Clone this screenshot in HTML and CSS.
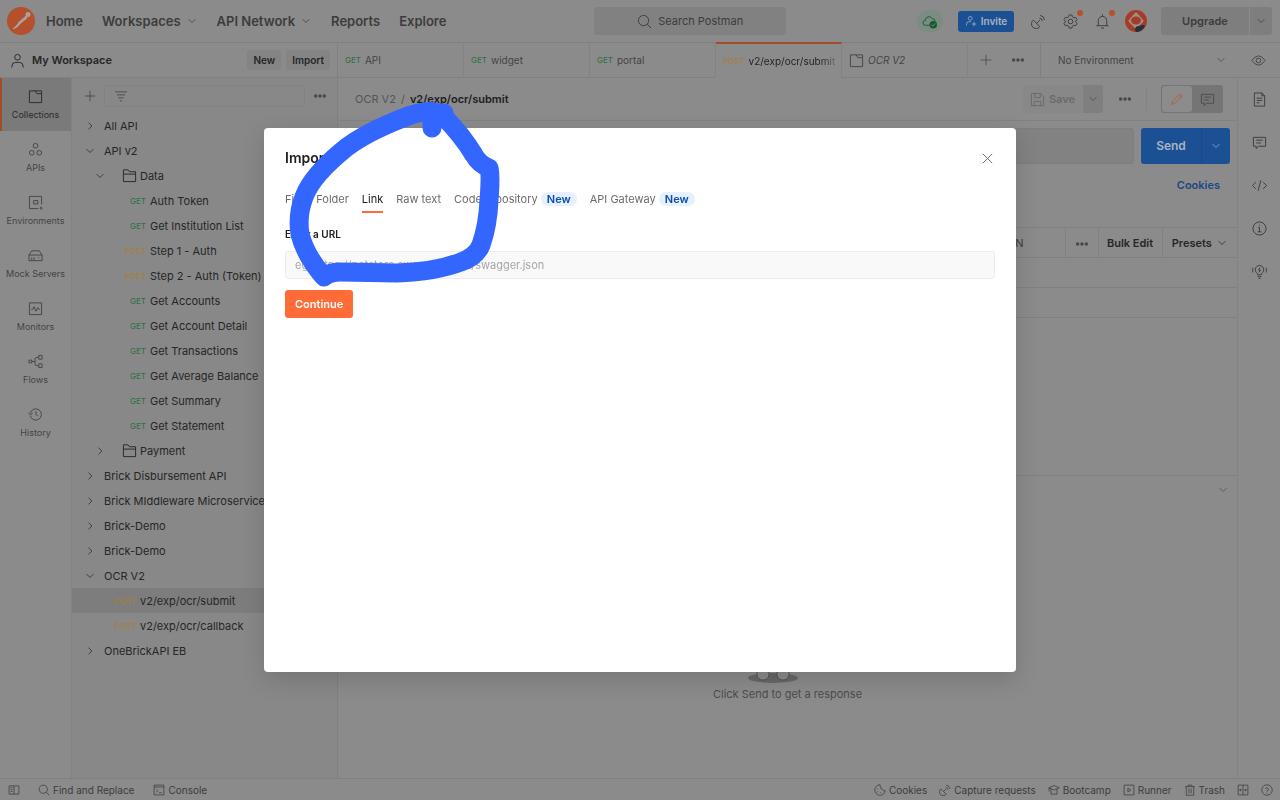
FILE: index.html
```html
<!DOCTYPE html>
<html lang="en">
<head>
    <meta charset="UTF-8">
    <meta name="viewport" content="width=device-width, initial-scale=1.0">
    <title>Postman - My Workspace</title>
    <link rel="stylesheet" href="styles.css">
</head>
<body>
    <!-- Icons -->
    <svg class="sprite" aria-hidden="true">
        <symbol id="i-down" viewBox="0 0 16 16"><path d="M3.500 5.500 8 10l4.500-4.500"/></symbol>
        <symbol id="i-right" viewBox="0 0 16 16"><path d="M6 3.500 10.500 8 6 12.500"/></symbol>
        <symbol id="i-plus" viewBox="0 0 16 16"><path d="M8 1v14M1 8h14"/></symbol>
        <symbol id="i-close" viewBox="0 0 16 16"><path d="m3 3 10 10M13 3 3 13"/></symbol>
        <symbol id="i-dots" viewBox="0 0 16 16"><circle cx="3" cy="8" r="2"/><circle cx="8" cy="8" r="2"/><circle cx="13" cy="8" r="2"/></symbol>
        <symbol id="i-search" viewBox="0 0 16 16"><circle cx="7" cy="7" r="5.500"/><path d="m11 11 4 4"/></symbol>
        <symbol id="i-user" viewBox="0 0 16 16"><circle cx="8" cy="4.500" r="3"/><path d="M2 15.500v-1.500a4 4 0 0 1 4-4h4a4 4 0 0 1 4 4v1.500"/></symbol>
        <symbol id="i-invite" viewBox="0 0 16 16"><circle cx="7" cy="4.500" r="2.500"/><path d="M2 14v-2a3 3 0 0 1 3-3h3M12 9v6M9 12h6"/></symbol>
        <symbol id="i-filter" viewBox="0 0 16 16"><path d="M0 2.500h16M2.500 6.500h11M4.500 10.500h7M6.500 14.500h3"/></symbol>
        <symbol id="i-collection" viewBox="0 0 16 16"><path d="M1.500 2h6l2 3h5v9.500h-13zM7.500 2h7v3"/></symbol>
        <symbol id="i-apis" viewBox="0 0 16 16"><circle cx="8" cy="4" r="2.500"/><circle cx="4" cy="11.500" r="2.500"/><circle cx="12" cy="11.500" r="2.500"/></symbol>
        <symbol id="i-env" viewBox="0 0 16 16"><path d="M14.500 10V1.500h-13v13H11M6 6h4.500v3.500H6z"/><circle cx="14" cy="14" r="1"/></symbol>
        <symbol id="i-mock" viewBox="0 0 16 16"><path d="M1 7.500h14v6H1zM1 7.500 4 3h8l3 4.500M4 10v3M6.500 10v3M11 10.500h1"/></symbol>
        <symbol id="i-monitor" viewBox="0 0 16 16"><path d="M1.500 2h13v12.500h-13zM3.500 9h1.500l1.500-3 2 5 2-4 1 2h1"/></symbol>
        <symbol id="i-flows" viewBox="0 0 16 16"><path d="M1 6.500h3v3H1zM11.500 1.500h3.500v4h-3.500zM11.500 10.500h3.500v4h-3.500zM4 8h3.500M11.500 3.500h-2a2 2 0 0 0-2 2v5a2 2 0 0 0 2 2h2"/></symbol>
        <symbol id="i-history" viewBox="0 0 16 16"><path d="M2.500 9.500a6 6 0 1 0 0-3M.5 6l2 2.500L5 6.500M8.500 4.500V8l2 1.500"/></symbol>
        <symbol id="i-folder" viewBox="0 0 16 16"><path d="M1.500 14.500V2h5l1.500 2h6.500v10.500zM1.500 6.500h13"/></symbol>
        <symbol id="i-eye" viewBox="0 0 16 16"><path d="M1 8q7-10 14 0-7 10-14 0z"/><circle cx="8" cy="8" r="2.500"/></symbol>
        <symbol id="i-save" viewBox="0 0 16 16"><path d="M1.500 1.500h10l3 3v10h-13zM5 1.500V6h6V1.500M4.500 14.500V10h7v4.500"/></symbol>
        <symbol id="i-pencil" viewBox="0 0 16 16"><path d="m1 15 1-4L12 1l3 3L5 14zM10 3l3 3"/></symbol>
        <symbol id="i-comment" viewBox="0 0 16 16"><path d="M1.500 2.500h13v9.500H7l-2.500 2.500V12h-3zM4.500 5.500h7M4.500 8.500h5"/></symbol>
        <symbol id="i-doc" viewBox="0 0 16 16"><path d="M2.500 1h8l3 3v11h-11zM10.500 1v3h3M5 6.500h6M5 9h6M5 11.500h3"/></symbol>
        <symbol id="i-code" viewBox="0 0 16 16"><path d="M4 4.500.5 8 4 11.500M12 4.500 15.500 8 12 11.500M9.500 2.500l-3 11"/></symbol>
        <symbol id="i-info" viewBox="0 0 16 16"><circle cx="8" cy="8" r="7"/><path d="M6.500 7H8v4.500M6 11.500h4M8 4v1"/></symbol>
        <symbol id="i-bulb" viewBox="0 0 16 16"><path d="M6 11.500c0-2-2.500-2.500-2.500-5.500a4.500 4.500 0 0 1 9 0c0 3-2.500 3.500-2.500 5.500zM6 13.500h4M7 15.500h2M8.500 3.500 7 6.500h2L7.500 9M.8 4v5M15.200 4v5"/></symbol>
        <symbol id="i-dish" viewBox="0 0 16 16"><path d="M2.500 6.500a5 5 0 1 0 7 7zM6 10l3.500-3.500M9 4.500a3 3 0 0 1 3 3M9.500 1.500a5.500 5.500 0 0 1 5 5"/></symbol>
        <symbol id="i-gear" viewBox="0 0 16 16"><path d="m6.500 1-.5 2-1.500 1-2-.5L1 6l1.500 1.500v1L1 10l1.500 2.500 2-.5L6 13l.5 2h3l.5-2 1.500-1 2 .5L15 10l-1.500-1.500v-1L15 6l-1.500-2.500-2 .5L10 3l-.5-2z"/><circle cx="8" cy="8" r="2.500"/></symbol>
        <symbol id="i-bell" viewBox="0 0 16 16"><path d="M1.500 12.500h13M3.500 12.500V7a4.500 4.500 0 0 1 9 0v5.500M8 .5V2.500M6.500 15h3"/></symbol>
        <symbol id="i-panel" viewBox="0 0 16 16"><path d="M1.500 2.500h13v11h-13zM8 2.500v11M3.500 5h2.500M3.500 7.500h2.500M3.500 10h2.500"/></symbol>
        <symbol id="i-console" viewBox="0 0 16 16"><path d="M1.500 1.500h13v13h-13zM1.500 4h13M4.500 7l2 2-2 2M8 11.500h3.500"/></symbol>
        <symbol id="i-cookie" viewBox="0 0 16 16"><path d="M8 1a7 7 0 1 0 7 8q-3 1-3.500-2Q8 7 9 4 7.500 3 8 1zM5 6v1M5 10v1M9 11v1"/></symbol>
        <symbol id="i-cap" viewBox="0 0 16 16"><path d="M1 5l7-3 7 3-7 3zM4 6.500v7h8v-7M1.500 5v5"/></symbol>
        <symbol id="i-runner" viewBox="0 0 16 16"><path d="M1.500 1.500h13v13h-13zM6.500 5.500v5L10.500 8z"/></symbol>
        <symbol id="i-trash" viewBox="0 0 16 16"><path d="M1.500 3.500h13M5.500 3.500v-2h5v2M3 3.500v11.500h10V3.500M6.500 6v6.500M9.500 6v6.500"/></symbol>
        <symbol id="i-panes" viewBox="0 0 16 16"><path d="M1.500 1.500h13v13h-13zM8 1.500v13M3 8h3.500M9.500 8H13M4.500 6.500v3M11.500 6.500v3"/></symbol>
        <symbol id="i-help" viewBox="0 0 16 16"><circle cx="8" cy="8" r="7"/><path d="M6 6.500a2 2 0 1 1 2 2.500v1M8 11.500v1"/></symbol>
    </svg>

    <div class="app">
        <!-- Top navigation -->
        <header class="topbar">
            <svg class="logo" viewBox="0 0 28 28" aria-label="Postman">
                <circle cx="14" cy="14" r="14" fill="#b5502d"/>
                <circle cx="21" cy="7.500" r="2.500" fill="#a9a29f"/>
                <path d="M19 9 11 16l1 1.500 8-6.500zM12 16l-6 6 4-2 3-3z" fill="#a9a29f" stroke="#a9a29f"/>
            </svg>
            <nav class="nav">
                <a href="#">Home</a>
                <a href="#">Workspaces <svg class="icon chev"><use href="#i-down"/></svg></a>
                <a href="#">API Network <svg class="icon chev"><use href="#i-down"/></svg></a>
                <a href="#">Reports</a>
                <a href="#">Explore</a>
            </nav>
            <button class="search"><svg class="icon lg"><use href="#i-search"/></svg>Search Postman</button>
            <div class="actions">
                <span class="sync">
                    <svg viewBox="0 0 16 16" class="icon lg"><path d="M8 12H3.500a2.500 2.500 0 0 1 0-5 4 4 0 0 1 7.500-2q3 0 3 3"/><circle cx="12" cy="11.500" r="4" fill="#15592f" stroke="none"/><path d="m10 11.500 1.500 1.500 2.500-3" stroke="#8c8c8c"/></svg>
                </span>
                <button class="invite"><svg class="icon"><use href="#i-invite"/></svg>Invite</button>
                <button class="icon-btn" aria-label="Capture requests"><svg class="icon lg"><use href="#i-dish"/></svg></button>
                <button class="icon-btn" aria-label="Settings"><svg class="icon lg"><use href="#i-gear"/></svg><i class="dot"></i></button>
                <button class="icon-btn" aria-label="Notifications"><svg class="icon lg"><use href="#i-bell"/></svg><i class="dot"></i></button>
                <svg class="avatar" viewBox="0 0 22 22"><circle cx="11" cy="11" r="11" fill="#a63c28"/><path d="m11 4 6 7-6 6-6-6z" fill="#9b8f8c" stroke="#9b8f8c" stroke-width="3" stroke-linejoin="round"/><ellipse cx="11" cy="10.500" rx="5" ry="4" fill="#a63c28"/><path d="M10 20q0-4 4-4 5-2 6 0-3 6-9 6z" fill="#26303a"/></svg>
                <div class="split upgrade"><button>Upgrade</button><button aria-label="Upgrade options"><svg class="icon chev"><use href="#i-down"/></svg></button></div>
            </div>
        </header>

        <div class="body">
            <aside class="left">
                <div class="workspace">
                    <svg class="icon lg"><use href="#i-user"/></svg>
                    <strong>My Workspace</strong>
                    <button>New</button>
                    <button>Import</button>
                </div>
                <div class="left-main">
                    <nav class="rail">
                        <a href="#" class="active"><svg class="icon lg"><use href="#i-collection"/></svg>Collections</a>
                        <a href="#"><svg class="icon lg"><use href="#i-apis"/></svg>APIs</a>
                        <a href="#"><svg class="icon lg"><use href="#i-env"/></svg>Environments</a>
                        <a href="#"><svg class="icon lg"><use href="#i-mock"/></svg>Mock Servers</a>
                        <a href="#"><svg class="icon lg"><use href="#i-monitor"/></svg>Monitors</a>
                        <a href="#"><svg class="icon lg"><use href="#i-flows"/></svg>Flows</a>
                        <a href="#"><svg class="icon lg"><use href="#i-history"/></svg>History</a>
                    </nav>
                    <div class="sidebar">
                        <div class="filter">
                            <button aria-label="Create collection"><svg class="icon"><use href="#i-plus"/></svg></button>
                            <label class="filter-box"><svg class="icon"><use href="#i-filter"/></svg><input type="text" aria-label="Filter collections"></label>
                            <button aria-label="More"><svg class="icon fill"><use href="#i-dots"/></svg></button>
                        </div>
                        <ul class="tree">
                            <li><svg class="icon chev"><use href="#i-right"/></svg>All API</li>
                            <li><svg class="icon chev"><use href="#i-down"/></svg>API v2</li>
                            <li class="folder"><svg class="icon chev"><use href="#i-down"/></svg><svg class="icon lg"><use href="#i-folder"/></svg>Data</li>
                            <li class="request"><span class="get">GET</span>Auth Token</li>
                            <li class="request"><span class="get">GET</span>Get Institution List</li>
                            <li class="request"><span class="post">POST</span>Step 1 - Auth</li>
                            <li class="request"><span class="post">POST</span>Step 2 - Auth (Token)</li>
                            <li class="request"><span class="get">GET</span>Get Accounts</li>
                            <li class="request"><span class="get">GET</span>Get Account Detail</li>
                            <li class="request"><span class="get">GET</span>Get Transactions</li>
                            <li class="request"><span class="get">GET</span>Get Average Balance</li>
                            <li class="request"><span class="get">GET</span>Get Summary</li>
                            <li class="request"><span class="get">GET</span>Get Statement</li>
                            <li class="folder"><svg class="icon chev"><use href="#i-right"/></svg><svg class="icon lg"><use href="#i-folder"/></svg>Payment</li>
                            <li><svg class="icon chev"><use href="#i-right"/></svg>Brick Disbursement API</li>
                            <li><svg class="icon chev"><use href="#i-right"/></svg>Brick MIddleware Microservice</li>
                            <li><svg class="icon chev"><use href="#i-right"/></svg>Brick-Demo</li>
                            <li><svg class="icon chev"><use href="#i-right"/></svg>Brick-Demo</li>
                            <li><svg class="icon chev"><use href="#i-down"/></svg>OCR V2</li>
                            <li class="child selected"><span class="post">POST</span>v2/exp/ocr/submit</li>
                            <li class="child"><span class="post">POST</span>v2/exp/ocr/callback</li>
                            <li><svg class="icon chev"><use href="#i-right"/></svg>OneBrickAPI EB</li>
                        </ul>
                    </div>
                </div>
            </aside>

            <main class="right">
                <div class="tabs">
                    <a href="#" class="tab"><span class="get">GET</span>API</a>
                    <a href="#" class="tab"><span class="get">GET</span>widget</a>
                    <a href="#" class="tab"><span class="get">GET</span>portal</a>
                    <a href="#" class="tab active"><span class="post">POST</span><span class="fade">v2/exp/ocr/submit</span></a>
                    <a href="#" class="tab preview"><svg class="icon lg"><use href="#i-collection"/></svg>OCR V2</a>
                    <div class="tab-actions">
                        <button aria-label="New tab"><svg class="icon"><use href="#i-plus"/></svg></button>
                        <button aria-label="Tab options"><svg class="icon fill"><use href="#i-dots"/></svg></button>
                    </div>
                    <button class="environment">No Environment<svg class="icon chev"><use href="#i-down"/></svg></button>
                    <button class="eye" aria-label="Environment quick look"><svg class="icon lg"><use href="#i-eye"/></svg></button>
                </div>
                <div class="work">
                    <div class="editor">
                        <div class="crumbs">
                            <span>OCR V2</span><span>/</span><strong>v2/exp/ocr/submit</strong>
                            <div class="crumb-actions">
                                <div class="split save"><button disabled><svg class="icon lg"><use href="#i-save"/></svg>Save</button><button aria-label="Save options"><svg class="icon chev"><use href="#i-down"/></svg></button></div>
                                <button class="more" aria-label="More"><svg class="icon fill"><use href="#i-dots"/></svg></button>
                                <div class="modes"><button class="on" aria-label="Edit"><svg class="icon"><use href="#i-pencil"/></svg></button><button aria-label="Comment"><svg class="icon lg"><use href="#i-comment"/></svg></button></div>
                            </div>
                        </div>
                        <div class="url-row">
                            <input type="text" aria-label="Request URL">
                            <div class="split send"><button>Send</button><button aria-label="Send options"><svg class="icon chev"><use href="#i-down"/></svg></button></div>
                        </div>
                        <div class="cookies"><a href="#">Cookies</a></div>
                        <table class="params">
                            <thead>
                                <tr>
                                    <th>DESCRIPTION</th>
                                    <th class="c-dots"><svg class="icon fill"><use href="#i-dots"/></svg></th>
                                    <th class="c-bulk">Bulk Edit</th>
                                    <th class="c-presets"><span>Presets <svg class="icon chev"><use href="#i-down"/></svg></span></th>
                                </tr>
                            </thead>
                            <tbody>
                                <tr><td colspan="4"></td></tr>
                                <tr><td colspan="4"></td></tr>
                            </tbody>
                        </table>
                        <section class="response">
                            <svg class="icon chev"><use href="#i-down"/></svg>
                            <div class="empty">
                                <svg viewBox="0 0 52 20" class="astronaut"><ellipse cx="26" cy="15" rx="25" ry="5" fill="#686868"/><path d="M10 4v8q1 5 6 5t6-5V4M30 4v8q1 5 6 5t6-5V4" fill="#8c8c8c" stroke="#555"/></svg>
                                <p>Click Send to get a response</p>
                            </div>
                        </section>
                    </div>
                    <nav class="tools">
                        <button aria-label="Documentation"><svg class="icon lg"><use href="#i-doc"/></svg></button>
                        <button aria-label="Comments"><svg class="icon lg"><use href="#i-comment"/></svg></button>
                        <button aria-label="Code"><svg class="icon lg"><use href="#i-code"/></svg></button>
                        <button aria-label="Info"><svg class="icon lg"><use href="#i-info"/></svg></button>
                        <button aria-label="Tips"><svg class="icon lg"><use href="#i-bulb"/></svg></button>
                    </nav>
                </div>
            </main>
        </div>

        <!-- Status bar -->
        <footer class="status">
            <button aria-label="Toggle sidebar"><svg class="icon"><use href="#i-panel"/></svg></button>
            <button class="find"><svg class="icon"><use href="#i-search"/></svg>Find and Replace</button>
            <button class="console"><svg class="icon"><use href="#i-console"/></svg>Console</button>
            <div class="status-right">
                <button><svg class="icon"><use href="#i-cookie"/></svg>Cookies</button>
                <button><svg class="icon"><use href="#i-dish"/></svg>Capture requests</button>
                <button><svg class="icon"><use href="#i-cap"/></svg>Bootcamp</button>
                <button><svg class="icon"><use href="#i-runner"/></svg>Runner</button>
                <button><svg class="icon"><use href="#i-trash"/></svg>Trash</button>
                <button aria-label="Two pane view"><svg class="icon"><use href="#i-panes"/></svg></button>
                <button aria-label="Help"><svg class="icon"><use href="#i-help"/></svg></button>
            </div>
        </footer>
    </div>

    <!-- Import modal -->
    <div class="overlay">
        <div class="modal" role="dialog" aria-labelledby="importTitle">
            <div class="modal-head">
                <h2 id="importTitle">Import</h2>
                <button aria-label="Close"><svg class="icon lg"><use href="#i-close"/></svg></button>
            </div>
            <nav class="modal-tabs">
                <a href="#">File</a>
                <a href="#">Folder</a>
                <a href="#" class="active">Link</a>
                <a href="#">Raw text</a>
                <a href="#">Code repository <span class="pill">New</span></a>
                <a href="#">API Gateway <span class="pill">New</span></a>
            </nav>
            <form>
                <label for="url">Enter a URL</label>
                <input type="text" id="url" placeholder="eg. https://petstore.swagger.io/v2/swagger.json">
                <button type="submit">Continue</button>
            </form>
            <!-- Hand-drawn marker -->
            <svg class="marker" viewBox="0 0 220 220" aria-hidden="true">
                <path d="M164 37C155 30 148 30 131 35Q90 50 67 67Q32 95 24 117Q17 135 20 154Q25 175 44 197Q50 192 60 192L117 193Q155 192 181 182Q196 177 201 165Q208 145 209 120Q211 95 209 88Q199 84 194 75Q182 55 164 37"/>
                <path d="M164 33 152 34V48"/>
            </svg>
        </div>
    </div>
</body>
</html>
```
FILE: styles.css
```css
* {
    box-sizing: border-box;
}
body {
    margin: 0;
    font-family: 'Inter', sans-serif;
    font-size: 11px;
    line-height: 16px;
    color: #262626;
    background: #8b8b8b;
}
a {
    color: inherit;
    text-decoration: none;
}
button, input {
    font: inherit;
    color: inherit;
    border: none;
    background: none;
    padding: 0;
    margin: 0;
}
button {
    display: flex;
    align-items: center;
    justify-content: center;
    cursor: pointer;
}
.sprite {
    display: none;
}
.icon {
    width: 12px;
    height: 12px;
    flex: none;
    fill: none;
    stroke: currentColor;
    stroke-width: 1px;
}
.icon.lg {
    width: 15px;
    height: 15px;
}
.icon.fill {
    width: 14px;
    height: 14px;
    fill: #484848;
    stroke: none;
}
.get, .post {
    font-size: 8px;
    color: #2a7044;
}
.post {
    color: #a87d34;
}
.app {
    display: flex;
    flex-direction: column;
    min-height: 100vh;
}

/* Top bar */
.topbar {
    display: flex;
    align-items: center;
    height: 43px;
    padding: 0 8px 0 7px;
    border-bottom: 1px solid #7f7f7f;
    color: #3c3c3c;
}
.logo {
    width: 28px;
    height: 28px;
    margin-right: 11px;
}
.nav {
    display: flex;
    gap: 19px;
    padding-right: 17px;
    font-size: 13px;
    font-weight: 600;
}
.nav a {
    display: flex;
    align-items: center;
    gap: 5px;
}
.search {
    width: 192px;
    height: 28px;
    margin: 0 auto;
    gap: 6px;
    font-size: 11px;
    background: #818181;
    border-radius: 3px;
}
.actions {
    display: flex;
    align-items: center;
}
.sync {
    display: flex;
    align-items: center;
    justify-content: center;
    width: 26px;
    height: 22px;
    margin-right: 15px;
    border-radius: 11px;
    background: #7d8c82;
    color: #15592f;
}
.invite {
    height: 21px;
    width: 56px;
    margin-right: 15px;
    gap: 4px;
    border-radius: 3px;
    background: #1b5194;
    color: #a9b4c2;
    font-size: 10px;
    font-weight: 600;
}
.icon-btn {
    position: relative;
    width: 20px;
    height: 22px;
    margin-right: 12px;
}
.dot {
    position: absolute;
    top: 0;
    right: -2px;
    width: 6px;
    height: 6px;
    border-radius: 50%;
    background: #b5502d;
}
.avatar {
    width: 22px;
    height: 22px;
    margin-right: 14px;
}
.split {
    display: flex;
}
.upgrade button {
    height: 28px;
    width: 88px;
    background: #7e7e7e;
    border-radius: 3px 0 0 3px;
    font-size: 11px;
    font-weight: 600;
}
.upgrade button + button, .save button + button {
    width: 22px;
    margin-left: 1px;
    border-radius: 0 3px 3px 0;
}

/* Layout */
.body {
    display: flex;
    flex: 1;
}
.left {
    display: flex;
    flex-direction: column;
    width: 338px;
    flex: none;
    border-right: 1px solid #818181;
}
.workspace {
    display: flex;
    align-items: center;
    gap: 5px;
    height: 35px;
    padding: 0 7px 0 10px;
    border-bottom: 1px solid #808080;
}
.workspace strong {
    flex: 1;
    padding-left: 2px;
    font-weight: 600;
}
.workspace button {
    height: 20px;
    padding: 0 6px;
    border-radius: 3px;
    background: #848484;
    font-size: 10px;
    font-weight: 600;
}
.left-main {
    display: flex;
    flex: 1;
}
.rail {
    width: 72px;
    flex: none;
    border-right: 1px solid #828282;
    color: #444;
    font-size: 9px;
    line-height: 14px;
}
.rail a {
    display: flex;
    flex-direction: column;
    align-items: center;
    gap: 4px;
    height: 53px;
    padding-top: 11px;
}
.rail a.active {
    background: #7a7a7a;
    box-shadow: inset 2px 0 #a54a2b;
    color: #2a2a2a;
}
.sidebar {
    flex: 1;
    min-width: 0;
    background: #888;
}
.filter {
    display: flex;
    align-items: center;
    gap: 8px;
    height: 35px;
    padding: 0 10px 0 12px;
    color: #3c3c3c;
}
.filter-box {
    display: flex;
    align-items: center;
    flex: 1;
    height: 22px;
    padding: 0 10px;
    border: 1px solid #828282;
    border-radius: 3px;
}
.filter-box input {
    width: 100%;
}
.tree {
    list-style: none;
    margin: 0;
    padding: 0;
}
.tree li {
    display: flex;
    align-items: center;
    gap: 8px;
    height: 25px;
    padding-left: 12px;
    white-space: nowrap;
}
.tree .folder {
    gap: 3px;
    padding-left: 22px;
}
.tree .folder .lg {
    margin-left: 13px;
}
.tree .request, .tree .child {
    gap: 4px;
    padding-left: 50px;
}
.tree .child {
    padding-left: 40px;
}
.tree .get, .tree .post {
    width: 24px;
    text-align: right;
}
.tree .selected {
    background: #7d7d7d;
}

/* Tabs */
.right {
    display: flex;
    flex-direction: column;
    flex: 1;
    min-width: 0;
}
.tabs {
    display: flex;
    height: 35px;
    color: #444;
}
.tabs > * {
    border-bottom: 1px solid #808080;
}
.tab {
    display: flex;
    align-items: center;
    gap: 4px;
    width: 126px;
    padding: 0 7px;
    border-right: 1px solid #828282;
    font-size: 10px;
}
.tab.active {
    margin-top: -1px;
    padding-right: 4px;
    border-top: 2px solid #a54a2b;
    border-bottom: none;
    color: #242424;
}
.fade {
    white-space: nowrap;
    mask-image: linear-gradient(to right, #000 85%, rgba(0, 0, 0, 0.3));
}
.tab.preview {
    font-style: italic;
}
.tab-actions {
    display: flex;
    justify-content: space-between;
    align-items: center;
    width: 73px;
    padding: 0 15px 0 12px;
    border-right: 1px solid #7f7f7f;
}
.environment {
    flex: 1;
    justify-content: space-between;
    padding: 0 10px 0 17px;
    font-size: 10px;
}
.eye {
    width: 43px;
}
.work {
    display: flex;
    flex: 1;
}

/* Request editor */
.editor {
    display: flex;
    flex-direction: column;
    flex: 1;
    min-width: 0;
}
.crumbs {
    display: flex;
    align-items: center;
    gap: 5px;
    height: 43px;
    padding: 0 14px 0 17px;
    border-bottom: 1px solid #828282;
    color: #555;
}
.crumbs strong {
    color: #202020;
    font-weight: 600;
}
.crumb-actions {
    display: flex;
    align-items: center;
    margin-left: auto;
}
.save button {
    width: 59px;
    height: 28px;
    gap: 4px;
    border-radius: 3px 0 0 3px;
    background: #888;
    color: #6a6a6a;
    font-weight: 600;
}
.save button + button {
    width: 20px;
    background: #7f7f7f;
    color: #444;
}
.more {
    width: 44px;
    height: 24px;
    border-right: 1px solid #828282;
    margin-right: 14px;
}
.modes {
    display: flex;
    padding: 1px;
    border-radius: 3px;
    background: #757575;
}
.modes button {
    width: 30px;
    height: 26px;
    color: #4c4c4c;
}
.modes .on {
    border-radius: 3px;
    background: #8c8c8c;
    color: #b5502d;
}
.url-row {
    display: flex;
    gap: 7px;
    padding: 7px 7px 0 17px;
}
.url-row input {
    flex: 1;
    border-radius: 3px;
    border: 1px solid #7e7e7e;
    background: #828282;
}
.send {
    border-radius: 3px;
    background: #1b5194;
    color: #a9b4c2;
    font-size: 12px;
    font-weight: 600;
}
.send button {
    width: 60px;
    height: 36px;
}
.send button + button {
    width: 29px;
    border-left: 1px solid #194a87;
}
.cookies {
    display: flex;
    justify-content: flex-end;
    padding: 13px 17px 34px;
    color: #1c4784;
    font-weight: 600;
}
.params {
    width: 100%;
    border-collapse: collapse;
    table-layout: fixed;
}
.params th, .params td {
    height: 30px;
    padding: 0;
    border: 1px solid #808080;
    border-right: none;
    font-weight: 600;
}
.params th:first-child {
    padding-right: 41px;
    text-align: right;
    font-weight: 400;
    color: #3c3c3c;
}
.params th:first-child, .params td {
    border-left: none;
}
.params span {
    display: flex;
    align-items: center;
    justify-content: center;
    gap: 4px;
}
.params .icon {
    vertical-align: middle;
}
.c-dots {
    width: 33px;
}
.c-bulk {
    width: 64px;
}
.c-presets {
    width: 75px;
}
.response {
    display: flex;
    flex-direction: column;
    flex: 1;
    margin-top: 157px;
    padding: 8px;
    border-top: 1px solid #808080;
    color: #4c4c4c;
}
.response > .chev {
    align-self: flex-end;
}
.empty {
    display: flex;
    flex-direction: column;
    align-items: center;
    flex: 1;
    justify-content: flex-end;
    padding-bottom: 68px;
}
.empty p {
    margin: 3px 0 0;
}
.astronaut {
    width: 52px;
    height: 20px;
    margin-right: 30px;
}
.tools {
    display: flex;
    flex-direction: column;
    align-items: center;
    gap: 23px;
    width: 43px;
    padding-top: 11px;
    border-left: 1px solid #828282;
    color: #3c3c3c;
}
.tools button {
    height: 20px;
}

/* Status bar */
.status {
    display: flex;
    align-items: center;
    height: 22px;
    padding: 0 7px 0 8px;
    border-top: 1px solid #808080;
    color: #3c3c3c;
    font-size: 10px;
}
.status button {
    gap: 3px;
}
.find {
    margin-left: 18px;
}
.console {
    margin-left: 19px;
}
.status-right {
    display: flex;
    gap: 12px;
    margin-left: auto;
}

/* Import modal */
.overlay {
    position: fixed;
    inset: 0;
    display: flex;
    align-items: center;
    justify-content: center;
}
.modal {
    position: relative;
    width: 752px;
    min-height: 68vh;
    padding: 20px 21px;
    border-radius: 4px;
    background: #fff;
    box-shadow: 0 8px 24px rgba(0, 0, 0, 0.15);
    color: #212121;
}
.modal-head {
    display: flex;
    justify-content: space-between;
    height: 20px;
    color: #6b6b6b;
}
.modal-head h2 {
    margin: 0;
    font-size: 14px;
    line-height: 20px;
    font-weight: 600;
    color: #212121;
}
.modal-tabs {
    display: flex;
    gap: 13px;
    margin-top: 23px;
    color: #6b6b6b;
}
.modal-tabs a {
    padding-bottom: 4px;
    border-bottom: 2px solid transparent;
}
.modal-tabs .active {
    color: #212121;
    border-color: #ff6c37;
}
.pill {
    display: inline-block;
    padding: 0 6px;
    border-radius: 8px;
    line-height: 14px;
    background: #e7f0ff;
    color: #0a4fa8;
    font-weight: 600;
}
.modal label {
    display: block;
    margin: 13px 0 9px;
    font-size: 10px;
    font-weight: 600;
}
.modal input {
    display: block;
    width: 100%;
    height: 28px;
    padding: 0 9px;
    border: 1px solid #ededed;
    border-radius: 3px;
    background: #f9f9f9;
}
.modal input::placeholder {
    color: #a6a6a6;
}
.modal form button {
    height: 28px;
    margin-top: 11px;
    padding: 0 10px;
    border-radius: 3px;
    background: #ff6c37;
    color: #fff;
    font-weight: 600;
}
.marker {
    position: absolute;
    left: 16px;
    top: -48px;
    width: 220px;
    height: 220px;
    fill: none;
    stroke: #3366ff;
    stroke-width: 19px;
    stroke-linecap: round;
    stroke-linejoin: round;
    pointer-events: none;
}
```
